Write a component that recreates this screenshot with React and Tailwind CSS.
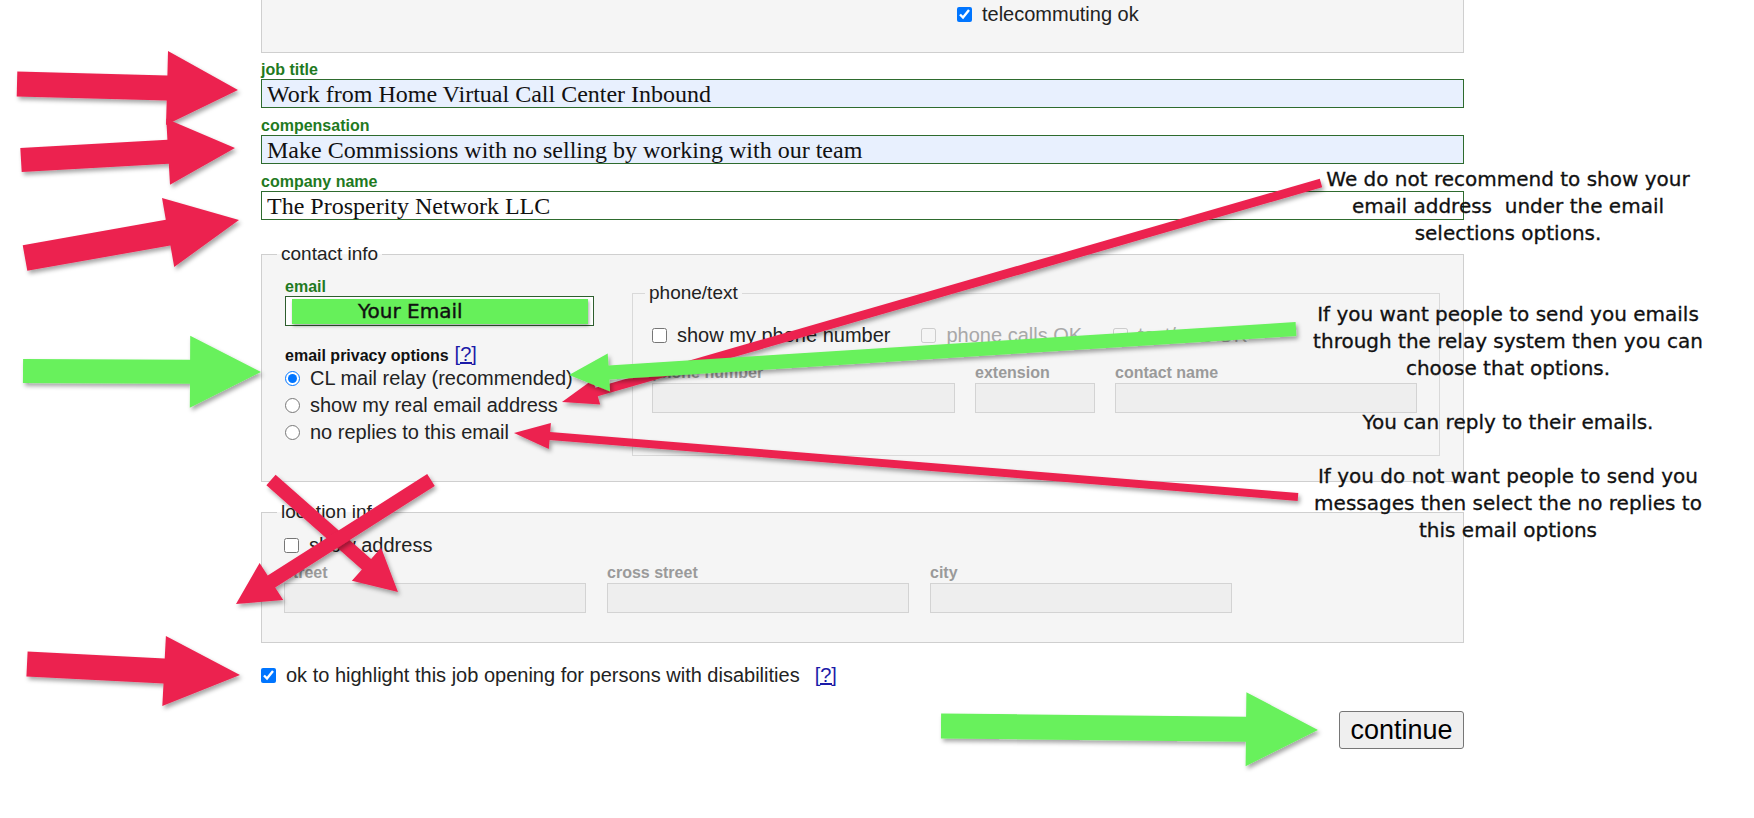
import React from "react";

const RED = "#ec2350";
const GREEN = "#68f15c";

// block arrow polygon from tail to tip
function arrowPoints([x1, y1], [x2, y2], w, L, H) {
  const dx = x2 - x1, dy = y2 - y1, len = Math.hypot(dx, dy);
  const ux = dx / len, uy = dy / len, px = -uy, py = ux;
  const bx = x2 - ux * L, by = y2 - uy * L;
  const pts = [
    [x1 + px * w, y1 + py * w],
    [bx + px * w, by + py * w],
    [bx + px * H, by + py * H],
    [x2, y2],
    [bx - px * H, by - py * H],
    [bx - px * w, by - py * w],
    [x1 - px * w, y1 - py * w],
  ];
  return pts.map((p) => p.map((n) => n.toFixed(1)).join(",")).join(" ");
}

const arrows = [
  // thick red, left column
  { from: [17, 84], to: [238, 90], w: 12.5, L: 71, H: 37, c: RED },
  { from: [21, 160], to: [235, 148], w: 12, L: 67, H: 33, c: RED },
  { from: [25, 258], to: [239, 220], w: 13, L: 72, H: 35, c: RED },
  { from: [27, 664], to: [240, 675], w: 12.5, L: 76, H: 35, c: RED },
  // thick green
  { from: [23, 371], to: [261, 372], w: 12, L: 71, H: 36, c: GREEN },
  { from: [941, 726], to: [1318, 730], w: 12.5, L: 72, H: 37, c: GREEN },
  // cross over location info
  { from: [271, 480], to: [398, 592], w: 7, L: 42, H: 22, c: RED },
  { from: [431, 480], to: [236, 604], w: 7, L: 42, H: 22, c: RED },
  // long thin pointers
  { from: [1321, 183], to: [562, 402], w: 4.5, L: 36, H: 13, c: RED },
  { from: [1296, 329], to: [569, 375], w: 7, L: 40, H: 19, c: GREEN },
  { from: [1298, 497], to: [514, 433], w: 4, L: 36, H: 13, c: RED },
];

function TextField({ label, value, filled, className }) {
  return (
    <div className={className}>
      <div className="text-[16px] leading-[19px] font-bold text-[#1f7a1f]">{label}</div>
      <input
        readOnly
        defaultValue={value}
        className={`block w-full h-[29px] border border-[#2e6b2e] px-[5px] font-['Liberation_Serif','Times_New_Roman',serif] text-[24px] text-[#111] outline-none ${filled ? "bg-[#e8f0fe]" : "bg-white"}`}
      />
    </div>
  );
}

function GrayField({ label, w }) {
  return (
    <div className={w}>
      <div className="text-[16px] leading-[19px] font-bold text-[#9a9a9a]">{label}</div>
      <input disabled className="mt-[1px] block w-full h-[30px] border border-[#d3d3d3] bg-[#eeeeee]" />
    </div>
  );
}

function Check({ children, checked, disabled, className = "" }) {
  return (
    <label className={`flex items-center gap-[10px] ${disabled ? "text-[#a8a8a8]" : ""} ${className}`}>
      <input type="checkbox" defaultChecked={checked} disabled={disabled} className="m-0 w-[15px] h-[15px]" />
      {children}
    </label>
  );
}

function Radio({ children, checked }) {
  return (
    <label className="flex items-center gap-[10px] leading-[27px]">
      <input type="radio" name="privacy" defaultChecked={checked} className="m-0 w-[15px] h-[15px]" />
      {children}
    </label>
  );
}

const note = "absolute left-[1288px] w-[440px] text-center font-['DejaVu_Sans',sans-serif] text-[20px] leading-[27px] text-[#111] [-webkit-text-stroke:0.3px_#111]";

export default function App() {
  return (
    <div className="relative w-[1754px] h-[818px] overflow-hidden bg-white font-['Liberation_Sans',Arial,sans-serif] text-[20px] text-[#222]">
      <div className="ml-[261px] w-[1203px]">
        {/* end of the previous fieldset */}
        <div className="h-[53px] border-x border-b border-[#cfcfcf] bg-[#f5f5f5] pl-[695px] pt-[3px] leading-[22px]">
          <Check checked>telecommuting ok</Check>
        </div>

        <TextField className="mt-[7px]" label="job title" value="Work from Home Virtual Call Center Inbound" filled />
        <TextField className="mt-[8px]" label="compensation" value="Make Commissions with no selling by working with our team" filled />
        <TextField className="mt-[8px]" label="company name" value="The Prosperity Network LLC" />

        <fieldset className="mt-[23px] border border-[#cfcfcf] bg-[#f5f5f5] pb-[25px]">
          <legend className="ml-[15px] px-[4px] text-[19px] leading-[22px]">contact info</legend>
          <div className="flex items-start">
            <div className="pl-[23px] pt-[12px] w-[332px]">
              <div className="text-[16px] leading-[19px] font-bold text-[#1f7a1f]">email</div>
              <input readOnly defaultValue="" className="block w-[309px] h-[30px] border border-[#2e5e2e] bg-white" />
              <div className="mt-[19px] text-[16px] leading-[19px] font-bold text-[#111]">
                email privacy options
                <a href="#" className="ml-[6px] font-normal text-[20px] text-[#1b1ba8] underline">[?]</a>
              </div>
              <Radio checked>CL mail relay (recommended)</Radio>
              <Radio>show my real email address</Radio>
              <Radio>no replies to this email</Radio>
            </div>

            <fieldset className="ml-[38px] mt-[17px] w-[808px] border border-[#d9d9d9] bg-[#f5f5f5] pb-[42px]">
              <legend className="ml-[12px] px-[4px] text-[19px] leading-[22px]">phone/text</legend>
              <div className="mt-[19px] pl-[19px] flex items-center gap-[31px] leading-[24px]">
                <Check>show my phone number</Check>
                <Check disabled>phone calls OK</Check>
                <Check disabled>text/sms OK</Check>
              </div>
              <div className="mt-[16px] pl-[19px] flex gap-[20px]">
                <GrayField label="phone number" w="w-[303px]" />
                <GrayField label="extension" w="w-[120px]" />
                <GrayField label="contact name" w="w-[302px]" />
              </div>
            </fieldset>
          </div>
        </fieldset>

        <fieldset className="mt-[19px] border border-[#cfcfcf] bg-[#f5f5f5] pb-[29px]">
          <legend className="ml-[15px] px-[4px] text-[19px] leading-[22px]">location info</legend>
          <div className="mt-[10px] pl-[22px] leading-[24px]">
            <Check>show address</Check>
          </div>
          <div className="mt-[6px] pl-[22px] flex gap-[21px]">
            <GrayField label="street" w="w-[302px]" />
            <GrayField label="cross street" w="w-[302px]" />
            <GrayField label="city" w="w-[302px]" />
          </div>
        </fieldset>

        <div className="mt-[20px] flex items-center leading-[24px]">
          <Check checked>ok to highlight this job opening for persons with disabilities</Check>
          <a href="#" className="ml-[15px] text-[#1b1ba8] underline">[?]</a>
        </div>

        <div className="mt-[24px] flex justify-end">
          <button className="w-[125px] h-[38px] border border-[#767676] rounded-[3px] bg-[#efefef] text-[27px] leading-none text-black">
            continue
          </button>
        </div>
      </div>

      {/* annotation layer */}
      <div className="absolute left-[292px] top-[299px] w-[296px] h-[25px] bg-[#66f05a] shadow-[1px_2px_3px_rgba(0,0,0,0.35)] pl-[66px] font-['DejaVu_Sans',sans-serif] text-[20px] leading-[25px] text-[#111] [-webkit-text-stroke:0.4px_#111]">
        Your Email
      </div>

      <svg className="absolute left-0 top-0 pointer-events-none" width="1754" height="818" viewBox="0 0 1754 818">
        <defs>
          <filter id="sh" x="-20%" y="-20%" width="140%" height="140%">
            <feDropShadow dx="2" dy="3" stdDeviation="2" floodColor="#000" floodOpacity="0.35" />
          </filter>
        </defs>
        {arrows.map((a, i) => (
          <polygon key={i} points={arrowPoints(a.from, a.to, a.w, a.L, a.H)} fill={a.c} filter="url(#sh)" />
        ))}
      </svg>

      <div className={`${note} top-[166px]`}>
        We do not recommend to show your
        <br />
        email address&nbsp; under the email
        <br />
        selections options.
      </div>

      <div className={`${note} top-[301px]`}>
        If you want people to send you emails
        <br />
        through the relay system then you can
        <br />
        choose that options.
        <br />
        <br />
        You can reply to their emails.
      </div>

      <div className={`${note} top-[463px]`}>
        If you do not want people to send you
        <br />
        messages then select the no replies to
        <br />
        this email options
      </div>
    </div>
  );
}
